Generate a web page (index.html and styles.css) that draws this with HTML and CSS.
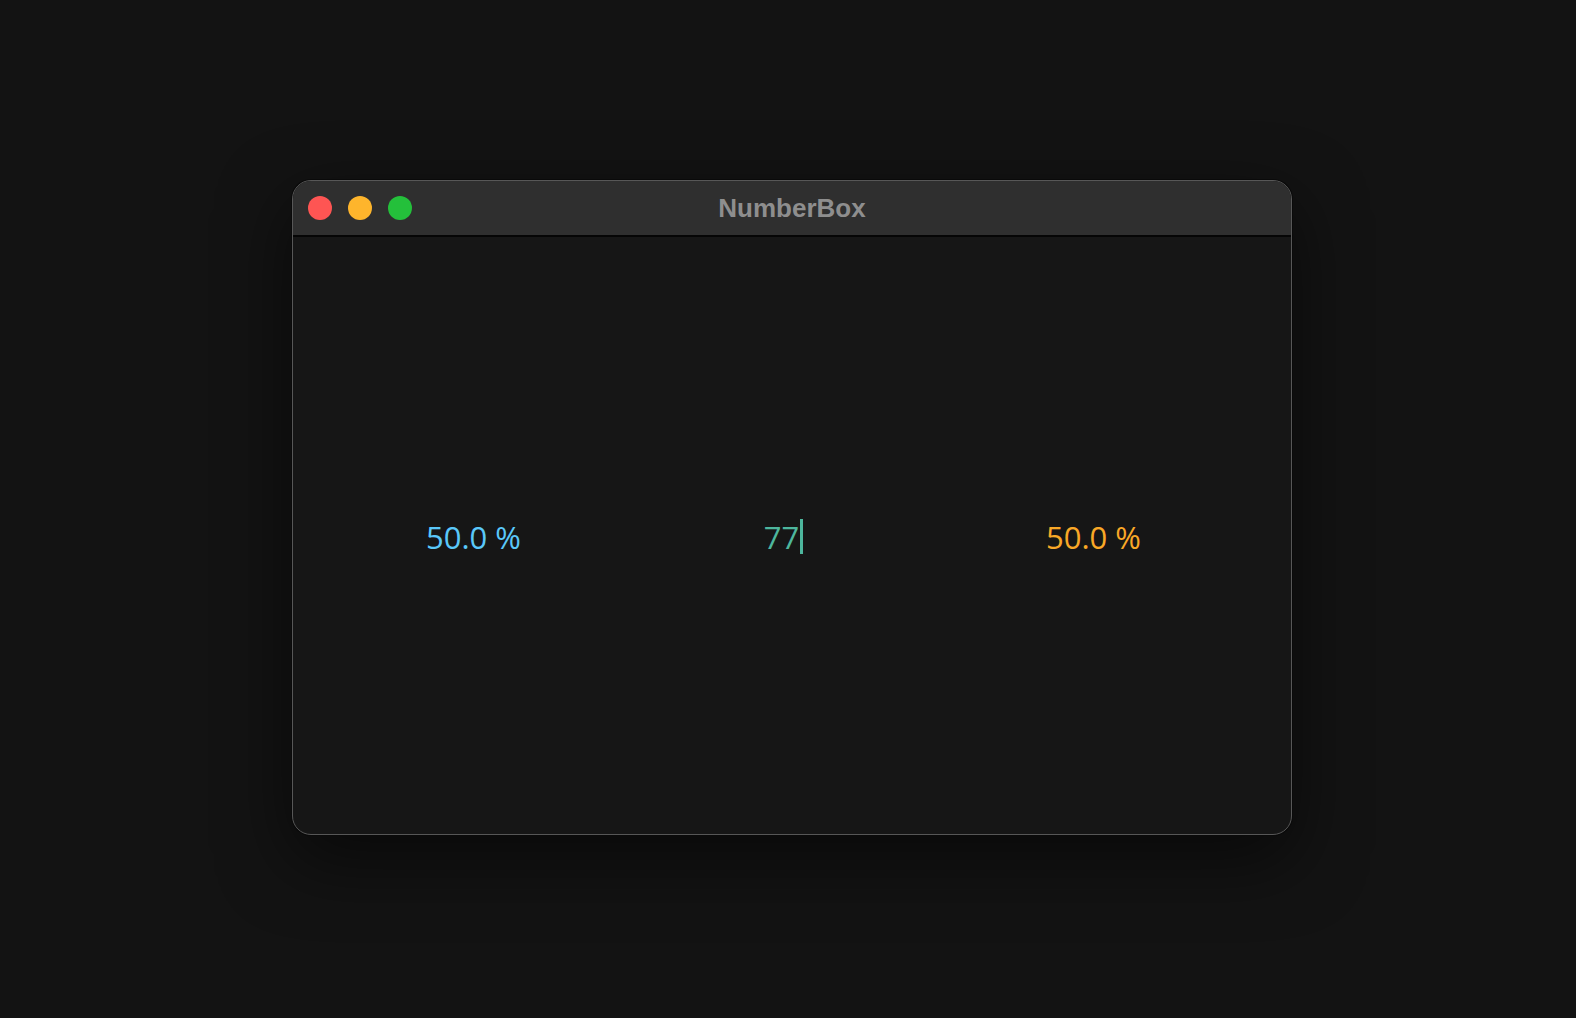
FILE: index.html
```html
<!DOCTYPE html>
<html>
<head>
<meta charset="utf-8">
<title>NumberBox</title>
<link rel="stylesheet" href="styles.css">
</head>
<body>
  <div class="window">
    <div class="titlebar">
      <div class="lights">
        <span class="light red"></span>
        <span class="light yellow"></span>
        <span class="light green"></span>
      </div>
      <div class="title">NumberBox</div>
    </div>
    <div class="content">
      <div class="field blue">50.0 %</div>
      <div class="field teal"><span>77</span><span class="caret"></span></div>
      <div class="field orange">50.0 %</div>
    </div>
  </div>
</body>
</html>
```

FILE: styles.css
```css
html, body {
  margin: 0;
  height: 100%;
}
body {
  background: #131313;
  padding: 180px 0 0 292px;
  box-sizing: border-box;
  font-family: "Open Sans", "DejaVu Sans", sans-serif;
}
.window {
  width: 1000px;
  height: 655px;
  box-sizing: border-box;
  border: 1px solid #575757;
  border-radius: 19px;
  background: #161616;
  overflow: hidden;
  display: flex;
  flex-direction: column;
  box-shadow: 0 0 0 1px #0a0a0a, 0 24px 70px rgba(0, 0, 0, 0.55);
}
.titlebar {
  height: 54px;
  flex: none;
  background: #2f2f2f;
  border-bottom: 2px solid #050505;
  display: flex;
  align-items: center;
  position: relative;
}
.lights {
  display: flex;
  gap: 16px;
  padding-left: 15px;
}
.light {
  width: 24px;
  height: 24px;
  border-radius: 50%;
  display: block;
}
.red { background: #fe5553; }
.yellow { background: #feb52c; }
.green { background: #24c03b; }
.title {
  position: absolute;
  left: 0;
  right: 0;
  top: 0;
  bottom: 0;
  display: flex;
  align-items: center;
  justify-content: center;
  font-family: "Liberation Sans", Arial, sans-serif;
  font-weight: bold;
  font-size: 26px;
  color: #8e8e8e;
}
.content {
  flex: 1;
  display: flex;
  align-items: center;
  justify-content: center;
  gap: 110px;
  padding-right: 17px;
  padding-top: 2px;
}
.field {
  width: 200px;
  display: flex;
  align-items: center;
  justify-content: center;
  font-size: 31px;
  font-weight: 500;
  line-height: 36px;
}
.blue { color: #5ac8fa; }
.teal { color: #4db69d; }
.orange { color: #f9a827; }
.caret {
  display: block;
  width: 3px;
  height: 35px;
  background: #4db69d;
  margin-left: 1px;
}
```
